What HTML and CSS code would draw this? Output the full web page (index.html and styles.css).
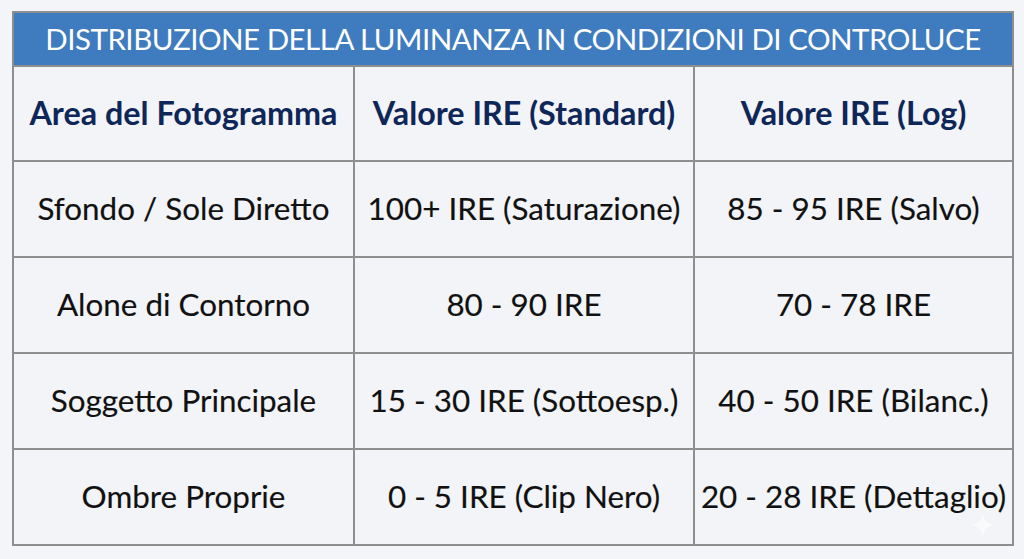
FILE: index.html
```html
<!DOCTYPE html>
<html lang="it">
<head>
<meta charset="utf-8">
<title>Distribuzione della luminanza</title>
<link rel="stylesheet" href="styles.css">
</head>
<body>
<div class="page">
  <table class="lum">
    <colgroup>
      <col class="c1"><col class="c2"><col class="c3">
    </colgroup>
    <thead>
      <tr class="title-row"><th colspan="3" class="title">DISTRIBUZIONE DELLA LUMINANZA IN CONDIZIONI DI CONTROLUCE</th></tr>
      <tr class="head-row">
        <th>Area del Fotogramma</th>
        <th>Valore IRE (Standard)</th>
        <th>Valore IRE (Log)</th>
      </tr>
    </thead>
    <tbody>
      <tr><td>Sfondo / Sole Diretto</td><td>100+ IRE (Saturazione)</td><td>85 - 95 IRE (Salvo)</td></tr>
      <tr><td>Alone di Contorno</td><td>80 - 90 IRE</td><td>70 - 78 IRE</td></tr>
      <tr><td>Soggetto Principale</td><td>15 - 30 IRE (Sottoesp.)</td><td>40 - 50 IRE (Bilanc.)</td></tr>
      <tr><td>Ombre Proprie</td><td>0 - 5 IRE (Clip Nero)</td><td>20 - 28 IRE (Dettaglio)</td></tr>
    </tbody>
  </table>
  <svg class="spark" width="24" height="24" viewBox="0 0 28 28" aria-hidden="true">
    <path d="M14 0 C15 9 19 13 28 14 C19 15 15 19 14 28 C13 19 9 15 0 14 C9 13 13 9 14 0 Z" fill="#ffffff"/>
  </svg>
</div>
</body>
</html>
```

FILE: styles.css
```css
html, body {
  margin: 0;
  padding: 0;
  background: #f3f5f8;
}

.page {
  position: relative;
  width: 1024px;
  height: 559px;
  padding: 11px 0 0 12px;
  box-sizing: border-box;
}

.lum {
  width: 1000px;
  table-layout: fixed;
  border-collapse: collapse;
  font-family: Lato, "Open Sans", sans-serif;
  background: #f2f4f7;
  border: 2px solid #8e8e8e;
}

.c1 { width: 341px; }
.c2 { width: 340px; }
.c3 { width: 319px; }

.title {
  height: 50px;
  padding: 0 0 2px;
  background: #3f7bbf;
  color: #ffffff;
  font-weight: 400;
  font-size: 29.5px;
  text-align: center;
  letter-spacing: -0.5px;
  border: 2px solid #8e8e8e;
}

.head-row th {
  height: 90px;
  padding: 0 0 3px;
  color: #0e2658;
  font-weight: 700;
  font-size: 32.3px;
  text-align: center;
  border: 2px solid #8e8e8e;
  white-space: nowrap;
}

td {
  height: 91px;
  padding: 0 0 3px;
  color: #111111;
  font-size: 31.4px;
  text-align: center;
  border: 2px solid #8e8e8e;
  white-space: nowrap;
  -webkit-text-stroke: 0.15px #111111;
}

.spark {
  position: absolute;
  left: 971px;
  top: 513px;
  opacity: 0.6;
}
```
